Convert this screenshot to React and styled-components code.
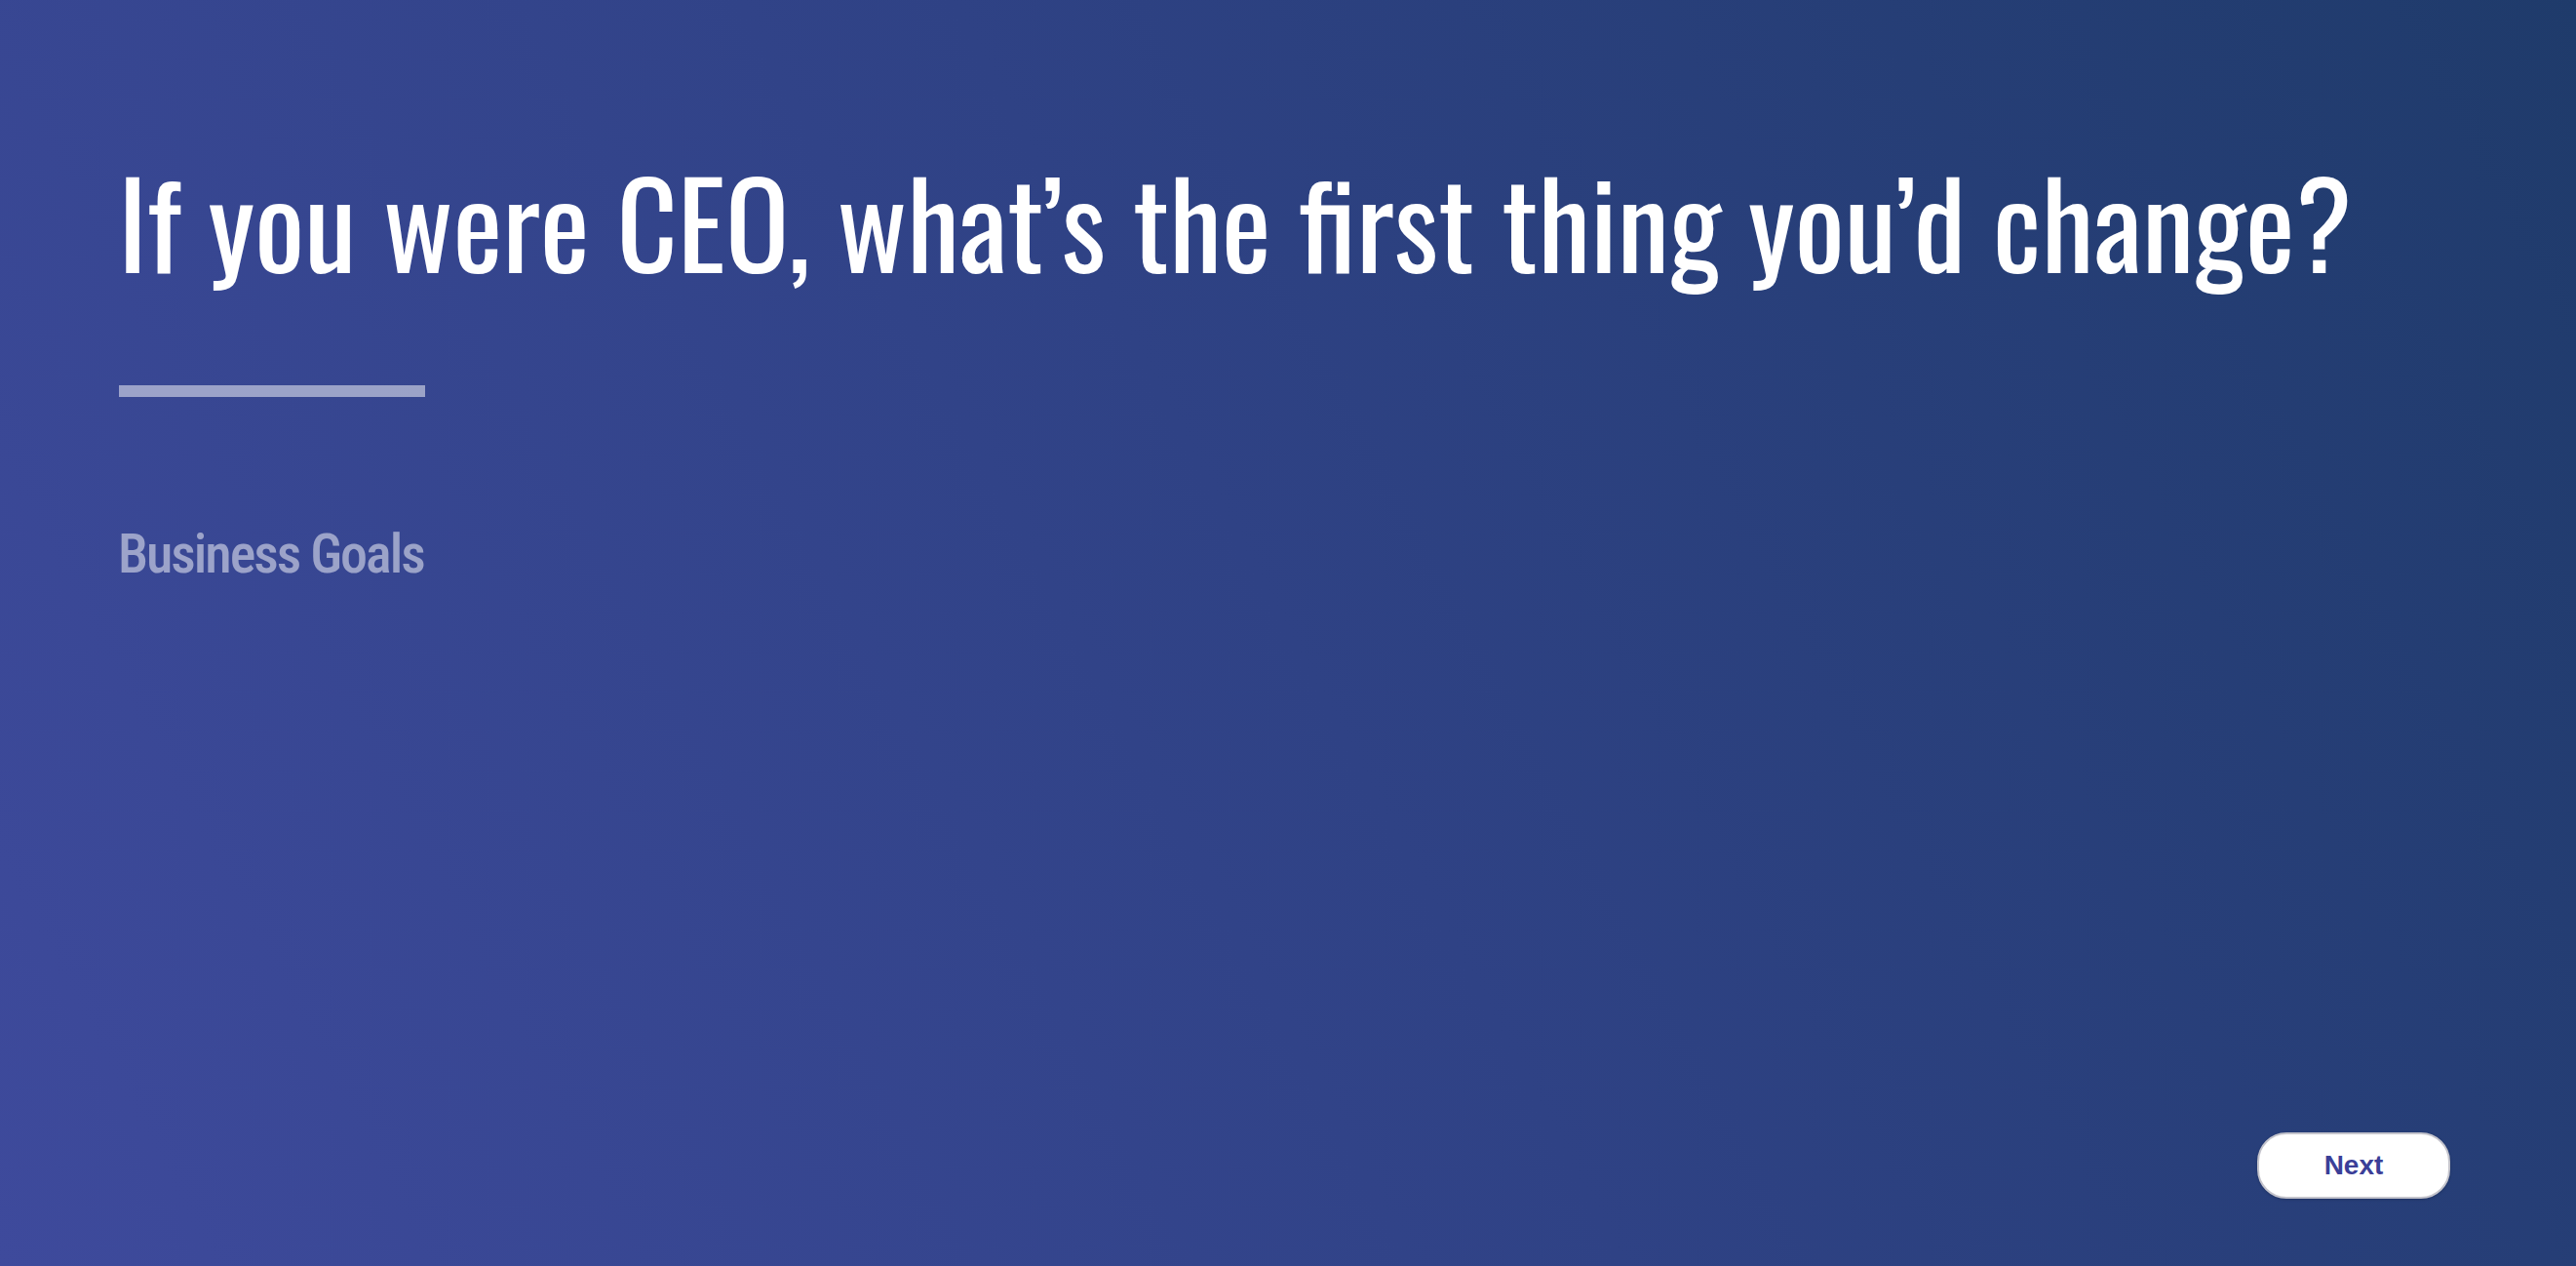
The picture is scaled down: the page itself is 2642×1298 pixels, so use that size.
import styled, { createGlobalStyle } from 'styled-components';

const Global = createGlobalStyle`
  html, body { margin: 0; padding: 0; }
  body { background: #2f4285; }
  * { box-sizing: border-box; }
`;

const Slide = styled.main`
  min-height: 100vh;
  display: flex;
  flex-direction: column;
  padding: 165px 129px 69px 121px;
  background: linear-gradient(62deg, #3e4a9c 0%, #2f4285 50%, #1f3b6b 100%);
`;

const Question = styled.h1`
  margin: 0;
  font-family: "Oswald", "Roboto Condensed", sans-serif;
  font-weight: 400;
  font-size: 121px;
  line-height: 1;
  color: #ffffff;
  white-space: nowrap;
`;

const Rule = styled.div`
  width: 314px;
  height: 12px;
  margin: 109px 0 0 1px;
  background: rgba(255, 255, 255, 0.5);
`;

const Category = styled.p`
  margin: 133px 0 0;
  font-family: "Roboto Condensed", "Liberation Sans", sans-serif;
  font-weight: 500;
  font-size: 56px;
  letter-spacing: -2px;
  line-height: 1;
  color: rgba(255, 255, 255, 0.5);
`;

const Footer = styled.footer`
  margin-top: auto;
  display: flex;
  justify-content: flex-end;
`;

const NextButton = styled.button`
  width: 198px;
  height: 68px;
  border: 2px solid #c4c4cc;
  border-radius: 30px;
  background: #ffffff;
  box-shadow: 0 1px 3px rgba(0, 0, 0, 0.18);
  font-family: "Liberation Sans", Arial, sans-serif;
  font-weight: 700;
  font-size: 28px;
  color: #3b3f98;
  cursor: pointer;
`;

export default function App() {
  return (
    <>
      <Global />
      <Slide>
        <Question>If you were CEO, what’s the first thing you’d change?</Question>
        <Rule />
        <Category>Business Goals</Category>
        <Footer>
          <NextButton>Next</NextButton>
        </Footer>
      </Slide>
    </>
  );
}
